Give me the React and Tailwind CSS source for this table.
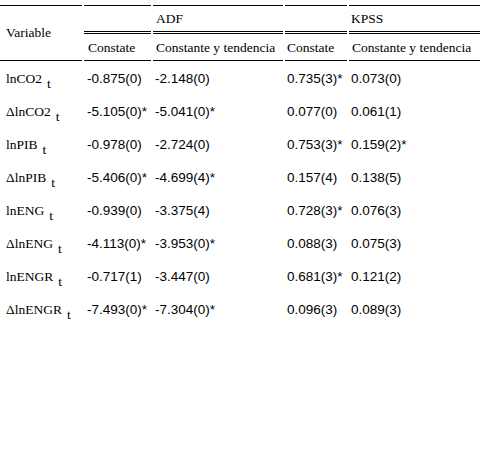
const rows = [
  { d: false, name: "lnCO2", v: ["-0.875(0)", "-2.148(0)", "0.735(3)*", "0.073(0)"] },
  { d: true, name: "lnCO2", v: ["-5.105(0)*", "-5.041(0)*", "0.077(0)", "0.061(1)"] },
  { d: false, name: "lnPIB", v: ["-0.978(0)", "-2.724(0)", "0.753(3)*", "0.159(2)*"] },
  { d: true, name: "lnPIB", v: ["-5.406(0)*", "-4.699(4)*", "0.157(4)", "0.138(5)"] },
  { d: false, name: "lnENG", v: ["-0.939(0)", "-3.375(4)", "0.728(3)*", "0.076(3)"] },
  { d: true, name: "lnENG", v: ["-4.113(0)*", "-3.953(0)*", "0.088(3)", "0.075(3)"] },
  { d: false, name: "lnENGR", v: ["-0.717(1)", "-3.447(0)", "0.681(3)*", "0.121(2)"] },
  { d: true, name: "lnENGR", v: ["-7.493(0)*", "-7.304(0)*", "0.096(3)", "0.089(3)"] },
];

const serif = "font-['Liberation_Serif',serif]";
const sans = "font-['Liberation_Sans',Arial,sans-serif]";

export default function App() {
  return (
    <div className="w-[483px] h-[472px] bg-white text-black overflow-hidden pt-[3px]">
      <table className="w-[484px] -ml-[2px] table-fixed border-separate border-spacing-[2px] text-[13px] leading-none">
        <colgroup>
          <col className="w-[82px]" />
          <col className="w-[67px]" />
          <col className="w-[130px]" />
          <col className="w-[62px]" />
          <col className="w-[131px]" />
        </colgroup>
        <thead className={`${serif} text-[13.5px]`}>
          <tr className="h-[29px]">
            <th
              rowSpan={2}
              className="border-t border-b border-black text-left font-normal pl-[6px] align-middle"
            >
              Variable
            </th>
            <th className="border-t border-b-[3px] border-b-black border-double border-t-black font-normal" />
            <th className="border-t border-b-[3px] border-b-black border-double border-t-black text-left font-normal pl-[3px] align-middle">
              ADF
            </th>
            <th className="border-t border-b-[3px] border-b-black border-double border-t-black font-normal" />
            <th className="border-t border-b-[3px] border-b-black border-double border-t-black text-left font-normal pl-[2px] align-middle">
              KPSS
            </th>
          </tr>
          <tr className="h-[25px]">
            <th className="border-b border-black text-left font-normal pl-[4px] whitespace-nowrap">Constate</th>
            <th className="border-b border-black text-left font-normal pl-[3px] whitespace-nowrap">Constante y tendencia</th>
            <th className="border-b border-black text-left font-normal pl-[2px] whitespace-nowrap">Constate</th>
            <th className="border-b border-black text-left font-normal pl-[3px] whitespace-nowrap">Constante y tendencia</th>
          </tr>
        </thead>
        <tbody>
          {rows.map((r, i) => (
            <tr key={i} className="h-[31px]">
              <td className={`${serif} text-[13.5px] pl-[6px] whitespace-nowrap align-middle`}>
                {r.d ? "Δ" : ""}
                {r.name}
                <span className="relative top-[5px] ml-[5px]">t</span>
              </td>
              {r.v.map((v, j) => (
                <td
                  key={j}
                  className={`${sans} text-[13.5px] whitespace-nowrap align-middle ${
                    j === 0 ? "pl-[3px]" : "pl-[2px]"
                  }`}
                >
                  {v}
                </td>
              ))}
            </tr>
          ))}
        </tbody>
      </table>
    </div>
  );
}
